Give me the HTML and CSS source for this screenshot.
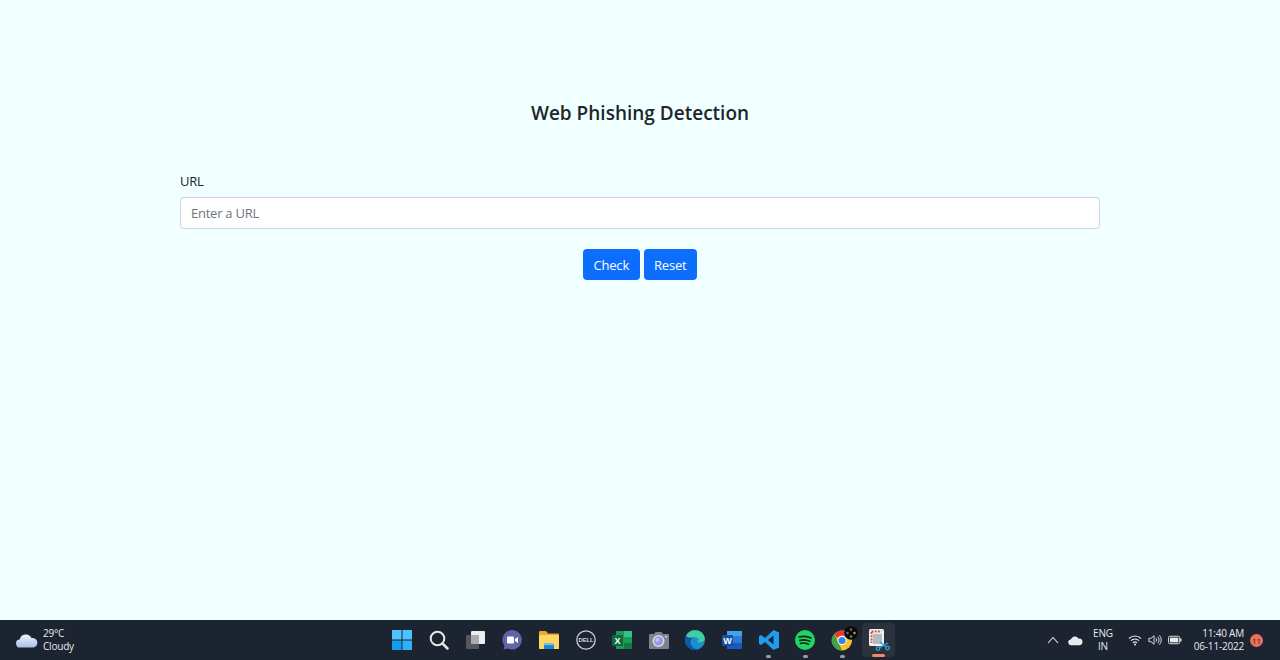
FILE: index.html
```html
<!DOCTYPE html>
<html lang="en">
<head>
    <meta charset="UTF-8">
    <title>Web Phishing Detection</title>
    <link rel="stylesheet" href="styles.css">
</head>
<body>
    <main class="page">
        <h1>Web Phishing Detection</h1>
        <form class="url-form">
            <label for="url">URL</label>
            <input type="text" id="url" placeholder="Enter a URL">
            <div class="buttons">
                <button type="button">Check</button>
                <button type="reset">Reset</button>
            </div>
        </form>
    </main>

    <footer class="taskbar">
        <div class="weather">
            <svg width="22" height="16" viewBox="0 0 22 16"><defs><linearGradient id="cloud" x1="0" y1="0" x2="0" y2="1"><stop offset="0" stop-color="#f0f3fa"/><stop offset="1" stop-color="#a9bfe8"/></linearGradient></defs><path d="M4.500 15.500a4 4 0 0 1-.8-8A6.300 6.300 0 0 1 15.500 6 4.800 4.800 0 0 1 17.500 15.500z" fill="url(#cloud)"/></svg>
            <div class="weather-text"><span>29°C</span><span>Cloudy</span></div>
        </div>

        <div class="apps">
            <span class="app"><svg width="22" height="22" viewBox="0 0 22 22"><rect x="1" y="1" width="9.500" height="9.500" fill="#4cc2ff"/><rect x="11.500" y="1" width="9.500" height="9.500" fill="#4cc2ff"/><rect x="1" y="11.500" width="9.500" height="9.500" fill="#0f9ded"/><rect x="11.500" y="11.500" width="9.500" height="9.500" fill="#2eb2f7"/></svg></span>
            <span class="app"><svg width="22" height="22" viewBox="0 0 22 22"><circle cx="9.500" cy="9.500" r="6.800" fill="none" stroke="#e4e6e8" stroke-width="2"/><path d="M14.500 14.500l5 5" stroke="#e4e6e8" stroke-width="2.500" stroke-linecap="round"/></svg></span>
            <span class="app"><svg width="22" height="22" viewBox="0 0 22 22"><rect x="1" y="6" width="13" height="14" rx="1" fill="#55575a"/><rect x="6" y="2" width="14" height="13" rx="1" fill="#eceef0"/><rect x="6" y="6" width="8" height="9" fill="#a9abad"/></svg></span>
            <span class="app"><svg width="22" height="22" viewBox="0 0 22 22"><path d="M11 1a9.800 9.800 0 1 1-4.500 18.500L2.500 20.500l1-3.800A9.800 9.800 0 0 1 11 1z" fill="#6264a7"/><rect x="6" y="7.500" width="7" height="7" rx="1.200" fill="#fff"/><path d="M14 10l3-2v6l-3-2z" fill="#fff"/></svg></span>
            <span class="app"><svg width="22" height="22" viewBox="0 0 22 22"><path d="M1 3a1 1 0 0 1 1-1h6l2 2.500h10a1 1 0 0 1 1 1V19a1 1 0 0 1-1 1H2a1 1 0 0 1-1-1z" fill="#e8a92c"/><rect x="1" y="6" width="20" height="14" rx="1" fill="#fdd663"/><rect x="6" y="14.500" width="10" height="5.500" fill="#1f87d4"/><rect x="6" y="14.500" width="10" height="1.500" fill="#7fc4ee"/></svg></span>
            <span class="app"><svg width="22" height="22" viewBox="0 0 22 22"><circle cx="11" cy="11" r="9.200" fill="none" stroke="#c9cdd2" stroke-width="1.300"/><text class="dell" x="11" y="13" text-anchor="middle">DELL</text></svg></span>
            <span class="app"><svg width="22" height="22" viewBox="0 0 22 22"><rect x="5" y="2" width="16" height="18" rx="1" fill="#1f9a5c"/><rect x="13" y="2" width="8" height="6" fill="#33c481"/><rect x="13" y="14" width="8" height="6" fill="#107c41"/><rect x="1" y="6" width="11" height="11" rx="1" fill="#0f6b3a"/><text class="office" x="6.500" y="14.800" text-anchor="middle">X</text></svg></span>
            <span class="app"><svg width="22" height="22" viewBox="0 0 22 22"><path d="M2 5h4l1.500-2h6L15 5h5a1 1 0 0 1 1 1v13a1 1 0 0 1-1 1H2a1 1 0 0 1-1-1V6a1 1 0 0 1 1-1z" fill="#7f8389"/><circle cx="10.500" cy="12" r="6" fill="#d8dadd"/><circle cx="10.500" cy="12" r="4.500" fill="#9f8ff0"/><circle cx="9.500" cy="11" r="2" fill="#b9c8f7"/><rect x="17" y="7" width="2" height="1.500" fill="#d8dadd"/></svg></span>
            <span class="app"><svg width="22" height="22" viewBox="0 0 22 22"><circle cx="11" cy="11" r="10" fill="#1b8fd6"/><path d="M1 11a10 10 0 0 1 19.800-2c.4 3-2 4.500-4.800 4.500-2 0-3-.6-3-1.500 2 0 2.500-3.500-1.500-3.500C8 8.500 6 11 6.500 14c.5 3 3 5.500 7 6.800A10 10 0 0 1 1 11z" fill="#0c59a4"/><path d="M2 7a10 10 0 0 1 18.800 2c.4 3-2 4.500-4.800 4.500-2 0-3-.6-3-1.500 2 0 2.500-3.500-1.500-3.500C7 8.500 3.500 9 2 7z" fill="#3fd0a0"/></svg></span>
            <span class="app"><svg width="22" height="22" viewBox="0 0 22 22"><rect x="6" y="2" width="15" height="18" rx="1" fill="#2b7cd3"/><rect x="6" y="2" width="15" height="5" fill="#41a5ee"/><rect x="6" y="14" width="15" height="6" fill="#185abd"/><rect x="1" y="6" width="11" height="11" rx="1" fill="#1650a8"/><text class="office" x="6.500" y="14.800" text-anchor="middle">W</text></svg></span>
            <span class="app running"><svg width="22" height="22" viewBox="0 0 22 22"><path d="M15.500 1L21 3.500v15L15.500 21 7 13l-4 3-2-1.200V7.200L3 6l4 3z" fill="#1f9cf0"/><path d="M15.500 6.500L10 11l5.500 4.500z" fill="#1b2430"/></svg></span>
            <span class="app running"><svg width="22" height="22" viewBox="0 0 22 22"><circle cx="11" cy="11" r="10" fill="#1ed760"/><path d="M5 8c4-1 8.500-.8 12 1M5.800 11.300c3.500-.8 7-.6 10 1M6.500 14.300c3-.6 5.500-.4 8 .9" fill="none" stroke="#12251a" stroke-width="1.700" stroke-linecap="round"/></svg></span>
            <span class="app running"><svg width="22" height="22" viewBox="0 0 22 22"><circle cx="11" cy="11.500" r="10" fill="#fbc02d"/><path d="M11 1.500a10 10 0 0 1 8.700 5H11A5 5 0 0 0 6.500 9.500L3 5a10 10 0 0 1 8-3.500z" fill="#e53935"/><path d="M3 5l4.500 8.500L11 21.500A10 10 0 0 1 3 5z" fill="#43a047"/><circle cx="11" cy="11.500" r="4.600" fill="#fff"/><circle cx="11" cy="11.500" r="3.600" fill="#3d7fe6"/></svg><svg class="chrome-badge" width="14" height="14" viewBox="0 0 14 14"><circle cx="7" cy="7" r="6.800" fill="#08090b"/><circle cx="7" cy="3.500" r="1.200" fill="#d24a3c"/><circle cx="3.500" cy="7" r="1.200" fill="#4a7fd0"/><circle cx="10.500" cy="7" r="1.200" fill="#c9a83c"/><circle cx="7" cy="10.500" r="1.200" fill="#46a35a"/></svg></span>
            <span class="app active"><svg width="22" height="22" viewBox="0 0 22 22"><rect x="1" y="0" width="15" height="17" rx="1.500" fill="#eef0f2"/><rect x="5" y="5" width="9" height="10" fill="#b4bac2"/><path d="M3.500 3v11M3.500 2.500h10" fill="none" stroke="#d9534a" stroke-width="2" stroke-dasharray="2 1.200"/><path d="M11 19l9-5M12 13l6 5" stroke="#3f9fdf" stroke-width="1.300"/><circle cx="10" cy="19.500" r="1.800" fill="none" stroke="#3f9fdf" stroke-width="1.300"/><circle cx="19.500" cy="19" r="1.800" fill="none" stroke="#3f9fdf" stroke-width="1.300"/></svg></span>
        </div>

        <div class="tray">
            <svg width="12" height="8" viewBox="0 0 12 8"><path d="M1 7l5-5.500L11 7" fill="none" stroke="#e4e6e8" stroke-width="1.100"/></svg>
            <svg class="tray-cloud" width="15" height="11" viewBox="0 0 16 11"><path d="M3.500 10.500a3 3 0 0 1-.5-6 4.500 4.500 0 0 1 8.300-1A3.500 3.500 0 0 1 12.500 10.500z" fill="#e8eaec"/></svg>
            <div class="lang"><span>ENG</span><span>IN</span></div>
            <div class="status-icons">
                <svg width="14" height="12" viewBox="0 0 14 12"><path d="M1 4.500a8.500 8.500 0 0 1 12 0M3 6.700a5.500 5.500 0 0 1 8 0M5 8.800a2.700 2.700 0 0 1 4 0" fill="none" stroke="#e8eaec" stroke-width="1.100"/><circle cx="7" cy="10.500" r="1" fill="#e8eaec"/></svg>
                <svg width="14" height="12" viewBox="0 0 15 12"><path d="M1 4.200h2.200L6.500 1.500v9L3.200 7.800H1z" fill="none" stroke="#e8eaec"/><path d="M8.500 4a2.800 2.800 0 0 1 0 4M10.500 2.500a5 5 0 0 1 0 7M12.300 1a7.500 7.500 0 0 1 0 10" fill="none" stroke="#e8eaec"/></svg>
                <svg width="14" height="10" viewBox="0 0 15 10"><rect x=".5" y="1" width="12" height="8" rx="1.500" fill="none" stroke="#e8eaec"/><rect x="2" y="2.500" width="9" height="5" fill="#e8eaec"/><rect x="13" y="3.500" width="1.500" height="3" fill="#e8eaec"/></svg>
            </div>
            <div class="clock"><span>11:40 AM</span><span>06-11-2022</span></div>
            <span class="notify">11</span>
        </div>
    </footer>
</body>
</html>
```

FILE: styles.css
```css
/* General Styling */
html, body {
    height: 100%;
}

body {
    margin: 0;
    display: flex;
    flex-direction: column;
    overflow: hidden;
    font-family: 'Open Sans', 'Noto Sans', sans-serif;
    background: #f0ffff;
    color: #212529;
}

.page {
    flex: 1;
    width: 920px;
    margin: 0 auto;
    padding-top: 100px;
    box-sizing: border-box;
}

h1 {
    margin: 0 0 45px;
    font-size: 19px;
    font-weight: 600;
    line-height: 26px;
    text-align: center;
}

label {
    display: block;
    margin-bottom: 6px;
    font-size: 13px;
    line-height: 20px;
    letter-spacing: -0.2px;
}

input {
    display: block;
    width: 100%;
    height: 32px;
    padding: 0 10px;
    border: 1px solid #ced4da;
    border-radius: 4px;
    box-sizing: border-box;
    background: #fff;
    font-family: inherit;
    font-size: 13px;
    letter-spacing: -0.25px;
}

input::placeholder {
    color: #6c757d;
}

.buttons {
    display: flex;
    justify-content: center;
    gap: 4px;
    margin-top: 20px;
}

button {
    height: 31px;
    padding: 0 10.500px;
    border: none;
    border-radius: 4px;
    background: #0d6efd;
    color: #fff;
    font-family: inherit;
    font-size: 13px;
    letter-spacing: -0.2px;
    cursor: pointer;
}

/* Taskbar */
.taskbar {
    position: relative;
    display: flex;
    align-items: center;
    justify-content: space-between;
    height: 40px;
    flex-shrink: 0;
    background: #1b2430;
    color: #e8eaec;
    font-size: 10px;
    letter-spacing: -0.2px;
    line-height: 13px;
}

.weather {
    display: flex;
    align-items: center;
    gap: 5px;
    padding-left: 16px;
}

.weather-text, .lang, .clock {
    display: flex;
    flex-direction: column;
}

.apps {
    position: absolute;
    left: 384px;
    top: 0;
    display: flex;
}

.app {
    position: relative;
    display: flex;
    align-items: center;
    justify-content: center;
    width: 36.650px;
    height: 40px;
}

.app.running::after, .app.active::after {
    content: "";
    position: absolute;
    left: 50%;
    bottom: 2px;
    width: 5px;
    height: 3px;
    margin-left: -2.500px;
    border-radius: 2px;
    background: #9aa0a6;
}

.app.active {
    width: 33px;
    height: 34px;
    margin: 3px 0 3px 2px;
    border-radius: 4px;
    background: #2a323c;
}

.app.active::after {
    bottom: 0;
    width: 13px;
    margin-left: -6.500px;
    background: #f08a6c;
}

.chrome-badge {
    position: absolute;
    top: 6px;
    right: 2px;
}

.dell {
    font-family: 'Liberation Sans', sans-serif;
    font-size: 6px;
    font-weight: 700;
    fill: #d5d8dc;
}

.office {
    font-family: 'Liberation Sans', sans-serif;
    font-size: 9px;
    font-weight: 700;
    fill: #fff;
}

.tray {
    display: flex;
    align-items: center;
    padding-right: 17px;
}

.tray-cloud {
    margin-left: 9px;
}

.lang {
    margin-left: 10px;
    align-items: center;
}

.status-icons {
    display: flex;
    align-items: center;
    gap: 6px;
    margin-left: 15px;
}

.clock {
    align-items: flex-end;
    margin-left: 12px;
}

.notify {
    display: flex;
    align-items: center;
    justify-content: center;
    width: 13px;
    height: 13px;
    margin-left: 6px;
    border-radius: 50%;
    background: #e8735a;
    color: #222;
    font-size: 8px;
    letter-spacing: 0;
}
```
